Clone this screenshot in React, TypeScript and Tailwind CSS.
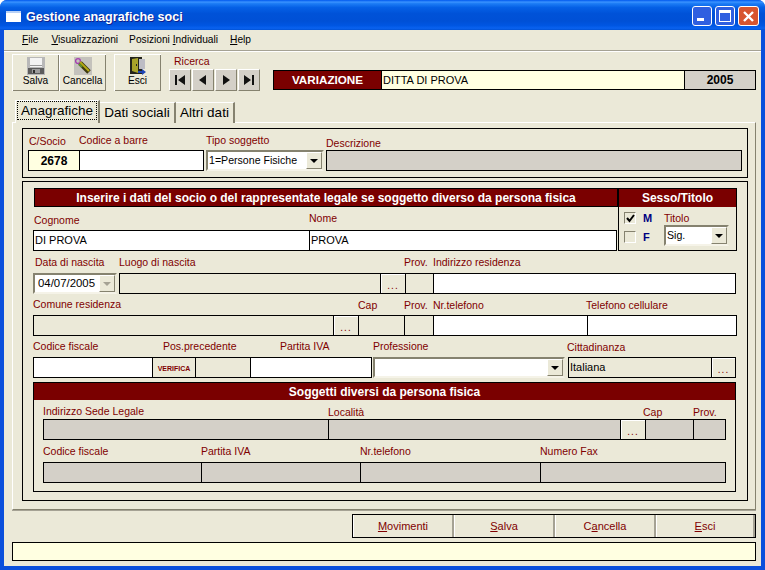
import type { ReactNode } from "react";

// Etichetta rossa sopra i campi
function Label({ className = "", children }: { className?: string; children: ReactNode }) {
  return <span className={`block shrink-0 text-[10.5px] leading-[12px] text-[#800000] whitespace-nowrap ${className}`}>{children}</span>;
}

// Riga di celle con bordo condiviso
function Cells({ className = "", children }: { className?: string; children: ReactNode }) {
  return <div className={`flex shrink-0 h-[21px] [&>*+*]:-ml-px ${className}`}>{children}</div>;
}

function Cell({ className = "", children }: { className?: string; children?: ReactNode }) {
  return <div className={`h-full shrink-0 border border-black flex items-center text-black overflow-hidden ${className}`}>{children && <span className="pl-[1px] text-[11px] leading-none">{children}</span>}</div>;
}

function Dots({ className = "" }: { className?: string }) {
  return (
    <div className={`h-full shrink-0 border border-black bg-[#ebe9d8] shadow-[inset_1px_1px_0_#fff] flex items-end justify-center pb-[3px] text-[10px] leading-[8px] tracking-[1px] text-[#800000] ${className}`}>
      ...
    </div>
  );
}

function Arrow({ disabled = false }: { disabled?: boolean }) {
  return (
    <div className="w-[16px] h-[17px] shrink-0 bg-[#ebe9d8] border border-t-white border-l-white border-r-[#85826f] border-b-[#85826f] flex items-center justify-center">
      <svg width="8" height="4" viewBox="0 0 8 4">
        <path d="M0 0h8L4 4z" fill={disabled ? "#a5a294" : "#000"} />
      </svg>
    </div>
  );
}

function Select({ className = "", textClass = "pl-[1px] text-[10.6px]", value, disabled = false }: { className?: string; textClass?: string; value?: string; disabled?: boolean }) {
  return (
    <div className={`h-[21px] shrink-0 bg-white border-2 border-t-[#85826f] border-l-[#85826f] border-r-[#ebe9d8] border-b-[#f5f3e8] flex items-center justify-between leading-none text-black ${className}`}>
      <span className={`whitespace-nowrap ${textClass}`}>{value}</span>
      <Arrow disabled={disabled} />
    </div>
  );
}

function ToolButton({ icon, label, className = "" }: { icon: ReactNode; label: string; className?: string }) {
  return (
    <div className={`w-[47px] h-[37px] shrink-0 bg-[#ebe9d8] shadow-[inset_1px_1px_0_#fff,inset_-1px_-1px_0_#85826f] flex flex-col items-center pt-[3px] ${className}`}>
      {icon}
      <span className="text-[10.2px] leading-[12px] text-black">{label}</span>
    </div>
  );
}

function NavButton({ d }: { d: string }) {
  return (
    <div className="w-[22px] h-[22px] bg-[#d4d0c8] border border-t-white border-l-white border-r-[#85826f] border-b-[#85826f] flex items-center justify-center">
      <svg width="12" height="12" viewBox="0 0 12 12">
        <path d={d} fill="#111" />
      </svg>
    </div>
  );
}

function BottomButton({ className = "", children }: { className?: string; children: ReactNode }) {
  return (
    <div className={`h-full bg-[#ebe9d8] border-l border-l-white border-r-2 border-r-[#a5a294] flex items-center justify-center text-[11px] text-[#800000] ${className}`}>
      {children}
    </div>
  );
}

function FloppyIcon() {
  return (
    <svg width="18" height="18" viewBox="0 0 18 18">
      <rect x="0" y="0" width="18" height="18" fill="#b8b8b8" />
      <rect x="3" y="1" width="12" height="9" fill="#f4f4f4" />
      <rect x="3" y="8" width="12" height="1" fill="#9a9a9a" />
      <rect x="1" y="11" width="16" height="6" fill="#5c5c5c" />
      <rect x="5" y="12" width="8" height="4" fill="#9d9d9d" />
      <rect x="6" y="13" width="2" height="3" fill="#2e2e2e" />
    </svg>
  );
}

function BroomIcon() {
  return (
    <svg width="18" height="18" viewBox="0 0 18 18">
      <rect width="18" height="18" fill="#c4c2bc" />
      <circle cx="4" cy="4" r="2.4" fill="none" stroke="#a53fb0" strokeWidth="1.4" />
      <path d="M6 6l9 9" stroke="#3d3a10" strokeWidth="5" />
      <path d="M6 5l9 9" stroke="#b5a814" strokeWidth="2" />
      <path d="M5 7l3 3" stroke="#5f8f2f" strokeWidth="2" />
    </svg>
  );
}

function DoorIcon() {
  return (
    <svg width="18" height="18" viewBox="0 0 18 18">
      <rect x="1" y="0" width="12" height="17" fill="#23231a" />
      <rect x="10" y="2" width="6" height="10" fill="#bcbcc4" />
      <path d="M3 2l6-1v15l-6-2z" fill="#a9a32a" />
      <rect x="7" y="7" width="1" height="2" fill="#222" />
      <path d="M9 14h4v-2l4 3-4 3v-2H9z" fill="#1f45b5" />
    </svg>
  );
}

export default function App() {
  return (
    <div className="w-[765px] h-[570px] flex flex-col overflow-hidden rounded-t-[7px] bg-[#0a4fdc] font-['Liberation_Sans',Arial,sans-serif]">
      {/* Barra del titolo */}
      <div className="h-[30px] shrink-0 flex items-center bg-[linear-gradient(to_bottom,#0058ee,#3a93ff_7%,#1c7cf5_12%,#0560e6_25%,#0052d8_45%,#0050d6_70%,#0056e2_85%,#0a62f0_94%,#0052d6)]">
        <div className="ml-[6px] mt-[2px] w-[15px] h-[11px] bg-white border-t-2 border-t-[#b8d0f5]" />
        <span className="ml-[5px] mt-[4px] text-[12.6px] font-bold text-white [text-shadow:1px_1px_0_#0f1f8f]">Gestione anagrafiche soci</span>
        <div className="ml-auto mr-[6px] mt-[2px] flex gap-[3px]">
          <div className="w-[20px] h-[20px] rounded-[3px] border border-white bg-[#2f5fe0] flex items-end pl-[4px] pb-[4px]">
            <div className="w-[7px] h-[3px] bg-white" />
          </div>
          <div className="w-[20px] h-[20px] rounded-[3px] border border-white bg-[#2f5fe0] flex items-center justify-center">
            <div className="w-[12px] h-[12px] border border-white border-t-[3px]" />
          </div>
          <div className="w-[21px] h-[20px] rounded-[3px] border border-white bg-[#d8552f] flex items-center justify-center">
            <svg width="13" height="13" viewBox="0 0 13 13">
              <path d="M2 2l9 9M11 2l-9 9" stroke="#fff" strokeWidth="2.4" />
            </svg>
          </div>
        </div>
      </div>

      <div className="flex-1 min-h-0 flex flex-col bg-[#ebe9d8] ml-[4px] mr-[4px] mb-[4px] pb-[5px]">
        {/* Menu */}
        <div className="h-[20px] shrink-0 flex items-center pl-[18px] text-[10.2px] text-black">
          <span><u>F</u>ile</span>
          <span className="ml-[13px]"><u>V</u>isualizzazioni</span>
          <span className="ml-[11px]">Posizioni <u>I</u>ndividuali</span>
          <span className="ml-[12px]"><u>H</u>elp</span>
        </div>
        <div className="h-[2px] shrink-0 border-t border-t-[#a5a294] border-b border-b-white" />

        {/* Barra strumenti */}
        <div className="h-[37px] mt-[2px] shrink-0 flex pl-[8px]">
          <ToolButton icon={<FloppyIcon />} label="Salva" />
          <ToolButton icon={<BroomIcon />} label="Cancella" />
          <ToolButton icon={<DoorIcon />} label="Esci" className="ml-[8px]" />
          <div className="ml-[8px] w-[91px] shrink-0">
            <Label className="ml-[5px] mt-[1px] h-[14px]">Ricerca</Label>
            <div className="flex gap-[1px]">
              <NavButton d="M1 1h2v10H1zM11 1v10L4 6z" />
              <NavButton d="M9 1v10L2 6z" />
              <NavButton d="M3 1v10l7-5z" />
              <NavButton d="M9 1h2v10H9zM1 1v10l7-5z" />
            </div>
          </div>
          <div className="ml-[13px] mt-[16px] h-[20px] flex [&>*+*]:-ml-px">
            <div className="w-[109px] border border-black bg-[#7a0000] text-white text-[11.7px] font-bold flex items-center justify-center">VARIAZIONE</div>
            <div className="w-[304px] border border-black bg-[#ffffe1] text-[11px] text-black flex items-center pl-[1px]">DITTA DI PROVA</div>
            <div className="w-[72px] border border-black bg-[#d4d0c8] text-[12px] font-bold text-black flex items-center justify-center">2005</div>
          </div>
        </div>

        {/* Linguette */}
        <div className="h-[23px] mt-[9px] shrink-0 flex items-end pl-[11px] relative z-10 -mb-px">
          <div className="w-[85px] h-[23px] bg-[#ebe9d8] border-t border-l border-white border-r-2 border-r-[#85826f] flex items-center justify-center text-[13.5px] text-black">
            <span className="border border-dotted border-black px-[3px] leading-[17px] -mt-[3px]">Anagrafiche</span>
          </div>
          <div className="w-[76px] h-[21px] bg-[#ebe9d8] border-t border-white border-r-2 border-r-[#85826f] flex items-center justify-center text-[13.5px] text-black">Dati sociali</div>
          <div className="w-[59px] h-[21px] bg-[#ebe9d8] border-t border-white border-r-2 border-r-[#85826f] flex items-center justify-center text-[13.5px] text-black">Altri dati</div>
        </div>

        {/* Pannello */}
        <div className="ml-[8px] mr-[5px] h-[388px] shrink-0 border border-t-white border-l-white border-r-[#85826f] border-b-[#85826f] shadow-[0_1px_0_#a5a294] pl-[9px] pt-[5px]">
          <div className="w-[726px] h-[50px] border border-black pt-[5px] pl-[5px]">
            <div className="flex h-[16px]">
              <Label className="w-[51px] pl-[1px] mt-[1px]">C/Socio</Label>
              <Label className="w-[127px]">Codice a barre</Label>
              <Label className="w-[120px]">Tipo soggetto</Label>
              <Label className="mt-[3px]">Descrizione</Label>
            </div>
            <div className="flex">
              <Cells>
                <div className="w-[52px] h-full border border-black bg-[#ffffe1] flex items-center justify-center font-bold text-[12px] text-black">2678</div>
                <Cell className="w-[125px] bg-white" />
              </Cells>
              <Select className="ml-[2px] w-[118px]" value="1=Persone Fisiche" />
              <Cells className="ml-[2px]">
                <Cell className="w-[416px] bg-[#d4d0c8]" />
              </Cells>
            </div>
          </div>

          <div className="mt-[3px] w-[726px] h-[320px] border border-black pt-[6px] pl-[10px]">
            <div className="flex h-[63px]">
              <div className="w-[585px] shrink-0">
                <div className="ml-[1px] w-[584px] h-[19px] border border-black bg-[#7a0000] text-white text-[12px] font-bold flex items-center justify-center">
                  Inserire i dati del socio o del rappresentate legale se soggetto diverso da persona fisica
                </div>
                <div className="flex h-[23px]">
                  <Label className="w-[276px] pl-[1px] mt-[7px]">Cognome</Label>
                  <Label className="mt-[5px]">Nome</Label>
                </div>
                <Cells>
                  <Cell className="w-[277px] bg-white">DI PROVA</Cell>
                  <Cell className="w-[308px] bg-white">PROVA</Cell>
                </Cells>
              </div>
              <div className="w-[119px] h-[63px] border border-black shrink-0">
                <div className="h-[18px] bg-[#7a0000] text-white text-[12px] font-bold flex items-center justify-center">Sesso/Titolo</div>
                <div className="flex pl-[5px] pt-[5px]">
                  <div className="w-[40px] shrink-0">
                    <div className="flex items-center h-[12px]">
                      <div className="w-[12px] h-[12px] border border-t-[#85826f] border-l-[#85826f] border-r-white border-b-white bg-[#ebe9d8] flex items-center justify-center">
                        <svg width="9" height="9" viewBox="0 0 9 9">
                          <path d="M1 4l2.5 3L8 1" fill="none" stroke="#000" strokeWidth="2" />
                        </svg>
                      </div>
                      <span className="ml-[7px] text-[11px] font-bold text-[#000080]">M</span>
                    </div>
                    <div className="flex items-center h-[12px] mt-[7px]">
                      <div className="w-[12px] h-[12px] border border-t-[#85826f] border-l-[#85826f] border-r-white border-b-white bg-[#ebe9d8]" />
                      <span className="ml-[7px] text-[11px] font-bold text-[#000080]">F</span>
                    </div>
                  </div>
                  <div>
                    <Label className="h-[13px]">Titolo</Label>
                    <Select className="w-[65px]" value="Sig." />
                  </div>
                </div>
              </div>
            </div>

            <div className="flex h-[22px] pt-[5px]">
              <Label className="w-[84px] pl-[2px]">Data di nascita</Label>
              <Label className="w-[287px] pl-[2px]">Luogo di nascita</Label>
              <Label className="w-[29px]">Prov.</Label>
              <Label>Indirizzo residenza</Label>
            </div>
            <div className="flex">
              <Select className="w-[84px]" textClass="pl-[3px] text-[11.4px]" value="04/07/2005" disabled />
              <Cells className="ml-[2px]">
                <Cell className="w-[262px]" />
                <Dots className="w-[26px]" />
                <Cell className="w-[29px]" />
                <Cell className="w-[303px] bg-white" />
              </Cells>
            </div>

            <div className="flex h-[21px] pt-[4px]">
              <Label className="w-[325px]">Comune residenza</Label>
              <Label className="w-[46px] mt-[1px]">Cap</Label>
              <Label className="w-[29px] mt-[1px]">Prov.</Label>
              <Label className="w-[153px] mt-[1px]">Nr.telefono</Label>
              <Label className="mt-[1px]">Telefono cellulare</Label>
            </div>
            <Cells>
              <Cell className="w-[301px]" />
              <Dots className="w-[26px]" />
              <Cell className="w-[47px]" />
              <Cell className="w-[30px]" />
              <Cell className="w-[155px] bg-white" />
              <Cell className="w-[150px] bg-white" />
            </Cells>

            <div className="flex h-[21px] pt-[4px]">
              <Label className="w-[130px]">Codice fiscale</Label>
              <Label className="w-[117px]">Pos.precedente</Label>
              <Label className="w-[93px]">Partita IVA</Label>
              <Label className="w-[194px]">Professione</Label>
              <Label className="mt-[1px]">Cittadinanza</Label>
            </div>
            <div className="flex">
              <Cells>
                <Cell className="w-[120px] bg-white" />
                <div className="w-[44px] h-full border border-black bg-[#ebe9d8] flex items-center justify-center pt-[2px] text-[7px] leading-none font-bold text-[#800000]">VERIFICA</div>
                <Cell className="w-[56px]" />
                <Cell className="w-[122px] bg-white" />
              </Cells>
              <Select className="ml-[1px] w-[192px]" />
              <Cells className="ml-[3px]">
                <Cell className="w-[144px]">Italiana</Cell>
                <Dots className="w-[25px]" />
              </Cells>
            </div>

            {/* Soggetti diversi */}
            <div className="mt-[4px] w-[703px] h-[110px] border border-black pl-[9px]">
              <div className="-ml-[9px] h-[17px] bg-[#7a0000] text-white text-[12px] font-bold flex items-center justify-center">
                Soggetti diversi da persona fisica
              </div>
              <div className="flex h-[19px] pt-[5px]">
                <Label className="w-[285px]">Indirizzo Sede Legale</Label>
                <Label className="w-[315px] mt-[1px]">Località</Label>
                <Label className="w-[50px] mt-[1px]">Cap</Label>
                <Label className="mt-[1px]">Prov.</Label>
              </div>
              <Cells>
                <Cell className="w-[286px] bg-[#d4d0c8]" />
                <Cell className="w-[293px] bg-[#d4d0c8]" />
                <Dots className="w-[26px]" />
                <Cell className="w-[49px] bg-[#d4d0c8]" />
                <Cell className="w-[33px] bg-[#d4d0c8]" />
              </Cells>
              <div className="flex h-[22px] pt-[5px]">
                <Label className="w-[158px]">Codice fiscale</Label>
                <Label className="w-[159px]">Partita IVA</Label>
                <Label className="w-[180px]">Nr.telefono</Label>
                <Label>Numero Fax</Label>
              </div>
              <Cells>
                <Cell className="w-[159px] bg-[#d4d0c8]" />
                <Cell className="w-[160px] bg-[#d4d0c8]" />
                <Cell className="w-[181px] bg-[#d4d0c8]" />
                <Cell className="w-[186px] bg-[#d4d0c8]" />
              </Cells>
            </div>
          </div>
        </div>

        {/* Pulsanti in basso */}
        <div className="mt-[4px] ml-[348px] w-[404px] h-[24px] shrink-0 border border-black flex">
          <BottomButton className="w-[101px]"><span><u>M</u>ovimenti</span></BottomButton>
          <BottomButton className="w-[101px]"><span><u>S</u>alva</span></BottomButton>
          <BottomButton className="w-[101px]"><span>C<u>a</u>ncella</span></BottomButton>
          <BottomButton className="flex-1 border-r-0"><span><u>E</u>sci</span></BottomButton>
        </div>

        {/* Barra di stato */}
        <div className="mt-[4px] ml-[8px] w-[744px] h-[19px] shrink-0 border border-black bg-[#ffffe1]" />
      </div>
    </div>
  );
}
